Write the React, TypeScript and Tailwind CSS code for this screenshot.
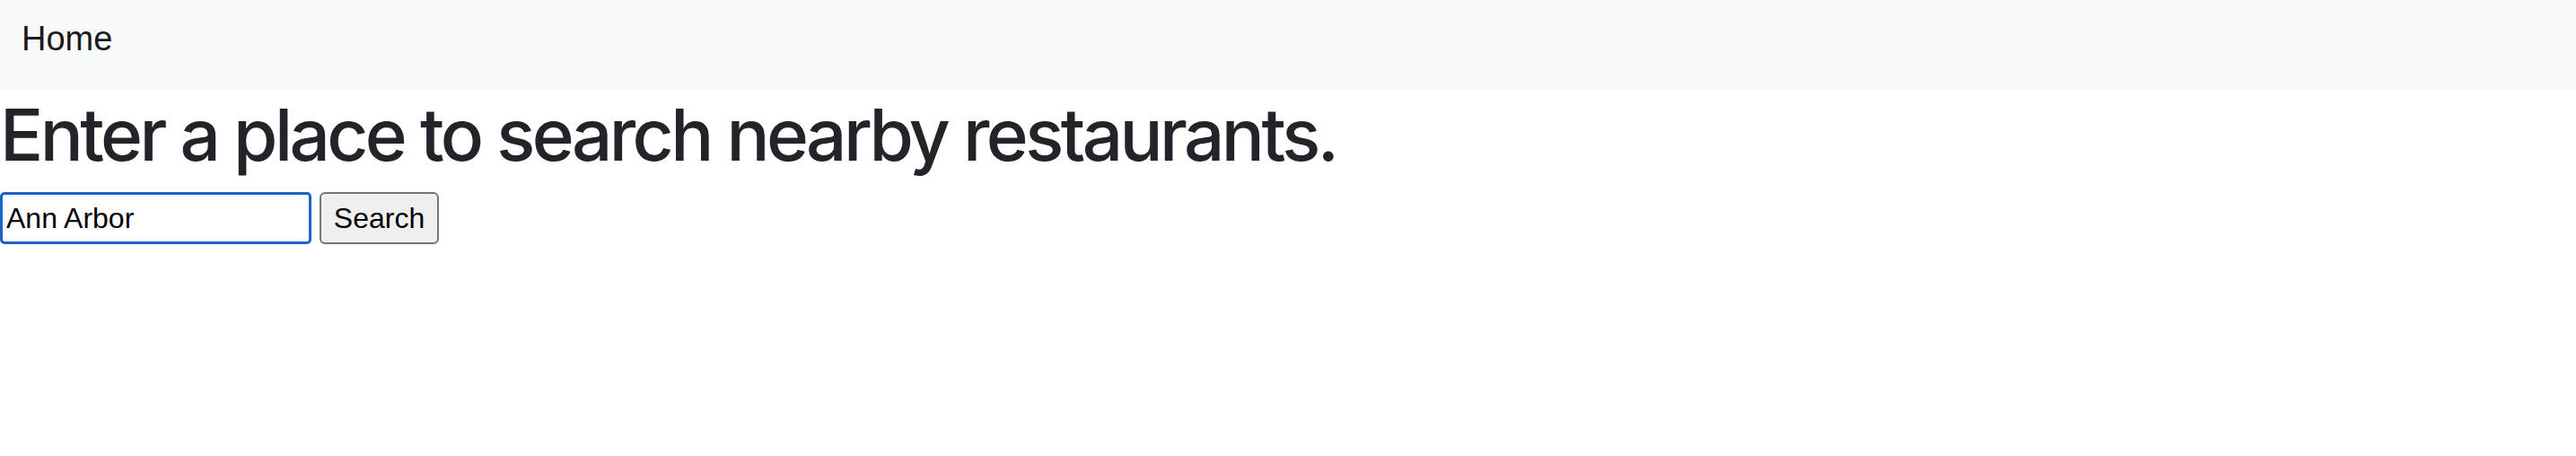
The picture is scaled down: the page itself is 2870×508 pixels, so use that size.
export default function App() {
  return (
    <div className="min-h-[508px] bg-white font-['Inter','Liberation_Sans',sans-serif] text-[#212529]">
      <nav className="h-[100px] bg-[#f8f9fa] px-[24px] pt-[24px]">
        <a className="block text-[38px] leading-none text-[#1a1a1a] font-['Liberation_Sans',sans-serif]">Home</a>
      </nav>
      <h1 className="mb-[16px] pt-[2px] text-[80px] font-medium leading-[96px] tracking-[-3.6px]">
        Enter a place to search nearby restaurants.
      </h1>
      <div className="flex items-center gap-[9px] font-['Liberation_Sans',sans-serif]">
        <input
          autoFocus
          defaultValue="Ann Arbor"
          className="h-[58px] w-[347px] rounded-[5px] border-[3px] border-[#1d62c8] px-[4px] text-[32px] text-black caret-black outline-none"
        />
        <button className="h-[58px] w-[133px] rounded-[6px] border-2 border-[#767676] bg-[#efefef] text-[32px] text-black">
          Search
        </button>
      </div>
    </div>
  );
}
